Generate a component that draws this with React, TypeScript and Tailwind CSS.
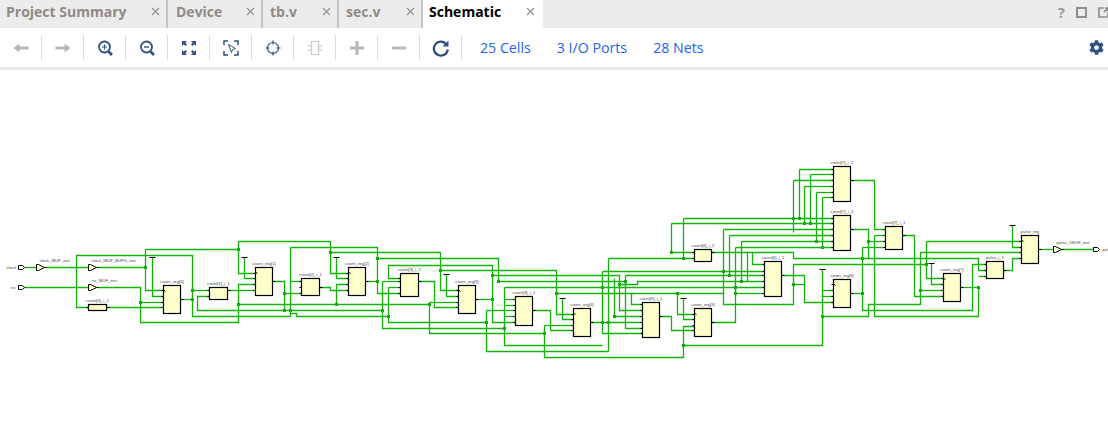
import React from 'react';
import { FaCog } from 'react-icons/fa';

type Cell = { x: number; y: number; w: number; h: number; label: string; pins: number[]; out: number };

const cells: Cell[] = [
  { x: 88, y: 304, w: 18, h: 6, label: 'count[0]_i_1', pins: [307], out: 307 },
  { x: 163, y: 285, w: 17, h: 28, label: 'count_reg[0]', pins: [290, 296, 302, 307], out: 299 },
  { x: 209, y: 287, w: 18, h: 12, label: 'count[1]_i_1', pins: [290, 296], out: 290 },
  { x: 255, y: 267, w: 17, h: 28, label: 'count_reg[1]', pins: [273, 278, 284, 290], out: 281 },
  { x: 301, y: 278, w: 18, h: 17, label: 'count[2]_i_1', pins: [281, 287, 293], out: 287 },
  { x: 348, y: 267, w: 17, h: 28, label: 'count_reg[2]', pins: [273, 278, 284, 290], out: 281 },
  { x: 400, y: 273, w: 18, h: 23, label: 'count[3]_i_1', pins: [278, 281, 287, 293], out: 281 },
  { x: 458, y: 285, w: 17, h: 28, label: 'count_reg[3]', pins: [290, 296, 302, 307], out: 299 },
  { x: 515, y: 296, w: 17, h: 29, label: 'count[4]_i_1', pins: [299, 305, 310, 316, 322], out: 310 },
  { x: 573, y: 308, w: 17, h: 28, label: 'count_reg[4]', pins: [314, 319, 325, 330], out: 322 },
  { x: 642, y: 302, w: 17, h: 35, label: 'count[5]_i_1', pins: [304, 310, 316, 322, 328, 333], out: 316 },
  { x: 694, y: 308, w: 17, h: 28, label: 'count_reg[5]', pins: [314, 319, 325, 330], out: 322 },
  { x: 694, y: 249, w: 17, h: 12, label: 'count[6]_i_2', pins: [252, 258], out: 252 },
  { x: 764, y: 261, w: 17, h: 35, label: 'count[6]_i_1', pins: [264, 271, 275, 281, 287, 293], out: 275 },
  { x: 833, y: 279, w: 17, h: 28, label: 'count_reg[6]', pins: [284, 290, 296, 302], out: 293 },
  { x: 833, y: 166, w: 17, h: 35, label: 'count[7]_i_2', pins: [169, 174, 180, 186, 192, 197], out: 180 },
  { x: 833, y: 215, w: 17, h: 35, label: 'count[7]_i_3', pins: [218, 223, 229, 235, 241, 247], out: 229 },
  { x: 885, y: 226, w: 17, h: 23, label: 'count[7]_i_1', pins: [229, 235, 241, 247], out: 235 },
  { x: 943, y: 273, w: 17, h: 28, label: 'count_reg[7]', pins: [278, 284, 290, 296], out: 287 },
  { x: 986, y: 261, w: 17, h: 17, label: 'pulse_i_1', pins: [264, 270, 276], out: 270 },
  { x: 1021, y: 235, w: 17, h: 28, label: 'pulse_reg', pins: [241, 247, 252, 258], out: 249 },
];

// every net is a green polyline, in page coordinates
const nets = [
  '24,267 36,267', '45,267 88,267', '97,267 145,267', '24,287 88,287',
  '145,249 145,290 163,290', '145,249 238,249', '238,241 238,273 255,273',
  '238,241 330,241 330,273 348,273', '330,252 440,252 440,290 458,290',
  '440,270 556,270 556,314 573,314',
  '97,287 140,287 140,322 238,322 238,284 255,284', '140,302 163,302',
  '106,307 163,307', '88,307 76,307 76,255 192,255 192,316 290,316',
  '180,299 192,299', '192,290 209,290', '227,290 255,290',
  '209,296 197,296 197,310 382,310', '238,304 336,304 429,304',
  '152,257 152,296 163,296', '244,257 244,278 255,278', '336,257 336,278 348,278',
  '348,284 336,284 336,304', '272,281 284,281 284,310', '284,293 301,293',
  '290,281 301,281', '290,247 377,247 377,293 400,293', '290,247 290,316',
  '365,281 377,281', '377,258 498,258 498,281',
  '319,287 330,287 330,290 348,290', '400,278 388,278 388,265 492,265 492,322 515,322',
  '382,281 400,281', '382,281 382,328 504,328', '504,287 504,345 602,345',
  '515,299 504,299', '504,287 764,287', '290,313 296,313 296,316 388,316',
  '388,287 388,322 486,322', '400,287 388,287', '486,310 515,310', '486,310 486,351 608,351',
  '418,281 434,281 434,307 458,307', '429,302 458,302', '429,304 429,333 544,333',
  '446,274 446,296 458,296', '475,299 492,299', '492,275 619,275 619,310 642,310',
  '498,281 625,281', '532,310 550,310 550,330 573,330', '544,325 573,325', '544,325 544,357 683,357 683,326 694,326',
  '515,316 504,316', '515,305 504,305', '556,293 723,293 723,304 793,304 793,264 926,264',
  '562,298 562,319 573,319', '590,322 642,322', '602,271 602,333 642,333',
  '602,271 764,271', '608,258 608,351', '608,258 694,258', '625,275 764,275',
  '625,275 625,328 642,328', '619,284 637,284 637,281 764,281', '631,293 631,304 642,304',
  '614,278 614,316 642,316', '659,316 671,316 671,330 694,330', '677,293 677,314 694,314',
  '683,298 683,319 694,319', '683,345 822,345 822,269', '822,290 833,290', '822,296 833,296',
  '822,316 868,316 868,304 920,304 920,252 1021,252', '683,218 683,258', '683,218 833,218',
  '671,223 671,252 694,252', '671,223 833,223', '723,229 723,293', '723,229 833,229',
  '729,235 729,275', '729,235 833,235', '741,241 741,281', '741,241 833,241',
  '735,247 735,322 711,322', '735,247 833,247', '735,293 764,293',
  '711,252 793,252 793,258 978,258 978,270 986,270', '752,252 752,264 764,264',
  '747,252 747,281', '781,275 804,275 804,302 833,302', '793,284 804,284',
  '793,180 793,232', '793,180 833,180', '799,169 799,218', '799,169 833,169',
  '810,174 810,223', '810,174 833,174', '804,186 804,223', '804,186 833,186',
  '816,192 816,241', '816,192 833,192', '822,197 822,247', '822,197 833,197',
  '850,180 874,180 874,229 885,229', '850,229 868,229 868,258', '868,241 885,241',
  '850,293 862,293', '862,247 862,310 972,310 972,264 986,264', '862,247 885,247',
  '874,235 885,235', '874,235 874,316 978,316 978,287', '978,276 986,276', '960,287 978,287',
  '926,241 926,278 943,278', '926,241 1021,241', '931,263 931,284 943,284', '920,290 943,290',
  '902,235 914,235 914,296 943,296', '1003,270 1012,270 1012,258 1021,258',
  '1012,225 1012,247 1021,247', '1038,249 1053,249', '1061,249 1093,249',
];

const dots = [
  [145, 267], [238, 249], [192, 290], [192, 299], [140, 302], [238, 304], [330, 252], [284, 293], [284, 310],
  [290, 310], [336, 304], [377, 281], [377, 258], [382, 310], [388, 316], [429, 304], [440, 270], [492, 275],
  [492, 299], [498, 281], [486, 322], [504, 328], [544, 333], [556, 293], [602, 287], [602, 322], [608, 322],
  [614, 316], [619, 284], [625, 281], [677, 293], [683, 258], [671, 252], [683, 345], [723, 271], [729, 275],
  [741, 281], [735, 287], [735, 293], [793, 218], [799, 218], [804, 223], [810, 223], [816, 241], [822, 247],
  [793, 284], [822, 316], [862, 258], [862, 293], [868, 241], [920, 290], [926, 264], [978, 287],
];

const vcc = [[149, 155, 257], [241, 247, 257], [333, 339, 257], [443, 449, 274], [559, 565, 298], [680, 686, 298], [819, 825, 269], [928, 934, 263], [1009, 1015, 225]];

const Buffer = ({ x, y, label, lx }: { x: number; y: number; label: string; lx: number }) => (
  <g>
    <path d={`M${x} ${y - 3}v6M${x} ${y - 3}h2l6 3l-6 3h-2`} fill="#ffffcc" stroke="#000" />
    <path d={`M${x + 8} ${y}h2`} stroke="#000" />
    <text x={lx} y={y - 6} fontSize="4.2" fill="#444">{label}</text>
  </g>
);

const Port = ({ x, y, label, lx }: { x: number; y: number; label: string; lx: number }) => (
  <g>
    <path d={`M${x} ${y - 2}h4l2 2l-2 2h-4z`} fill="#fff" stroke="#000" />
    <text x={lx} y={y + 1.5} fontSize="4.2" fill="#444">{label}</text>
  </g>
);

const Schematic = () => (
  <svg viewBox="0 70 1108 372" width={1108} height={372} className="block" style={{ fontFamily: '"Liberation Sans", sans-serif' }}>
    <g transform="translate(.5 .5)">
      {nets.map((d, i) => <polyline key={i} points={d} fill="none" stroke="#14b30a" strokeWidth="1.3" />)}
      {dots.map(([x, y], i) => <rect key={i} x={x - 1.5} y={y - 1.5} width={3} height={3} fill="#14a80a" />)}
      {vcc.map(([a, b, y], i) => <path key={i} d={`M${a} ${y}H${b}`} stroke="#000" />)}
      {cells.map((c) => (
        <g key={c.label}>
          <rect x={c.x} y={c.y} width={c.w} height={c.h} fill="#ffffcc" stroke="#000" strokeWidth="1.2" />
          {c.pins.map((p) => <path key={p} d={`M${c.x - 2} ${p}h2`} stroke="#000" />)}
          <path d={`M${c.x + c.w} ${c.out}h3`} stroke="#000" />
          {c.label.includes('reg') && <path d={`M${c.x} ${c.y + 4.5}l2 1.5`} stroke="#000" />}
          <text x={c.x + c.w / 2} y={c.y - 3} fontSize="4.2" fill="#444" textAnchor="middle">{c.label}</text>
        </g>
      ))}
      <Buffer x={36} y={267} label="clock_IBUF_inst" lx={39} />
      <Buffer x={88} y={267} label="clock_IBUF_BUFG_inst" lx={91} />
      <Buffer x={88} y={287} label="rst_IBUF_inst" lx={91} />
      <Buffer x={1053} y={249} label="pulse_OBUF_inst" lx={1056} />
      <Port x={18} y={267} label="clock" lx={6} />
      <Port x={18} y={287} label="rst" lx={10} />
      <Port x={1093} y={249} label="pulse" lx={1102} />
    </g>
  </svg>
);

const Tab = ({ label, w, pl, active }: { label: string; w: string; pl: string; active?: boolean }) => (
  <div className={`${w} ${pl} h-full shrink-0 flex items-center justify-between pr-[6px] pb-[6px] border-r-2 ${active ? 'bg-white border-transparent text-black' : 'border-[#c4c4c4] text-[#8f8a86]'}`}>
    <span className="text-[14px] font-bold">{label}</span>
    <svg width="9" height="9" viewBox="0 0 9 9"><path d="M1 1l7 7M8 1l-7 7" stroke="#8f8f8f" strokeWidth="1.1" /></svg>
  </div>
);

const TB = ({ children }: { children: React.ReactNode }) => (
  <div className="w-[42px] h-[25px] flex items-center justify-center border-r border-[#dcdcdc]">
    <svg width="20" height="20" viewBox="0 0 20 20" fill="none">{children}</svg>
  </div>
);

const navy = '#2f5080';
const off = '#b8b8b8';

export default function App() {
  return (
    <div className="w-[1108px] h-[442px] bg-white overflow-hidden" style={{ fontFamily: '"Open Sans", sans-serif' }}>
      <div className="h-[28px] bg-[#ececec] flex items-center">
        <Tab label="Project Summary" w="w-[168px]" pl="pl-[6px]" />
        <Tab label="Device" w="w-[95px]" pl="pl-[8px]" />
        <Tab label="tb.v" w="w-[76px]" pl="pl-[7px]" />
        <Tab label="sec.v" w="w-[84px]" pl="pl-[7px]" />
        <Tab label="Schematic" w="w-[120px]" pl="pl-[6px]" active />
        <div className="flex-1" />
        <div className="flex items-center gap-[11px] mr-[-1px] pb-[3px]">
          <span className="text-[15px] font-bold text-[#9a9a9a] leading-none">?</span>
          <span className="w-[11px] h-[11px] border-2 border-[#8f8f8f]" />
          <svg width="11" height="11" viewBox="0 0 11 11" fill="none"><path d="M6 1H1v9h9V5M7 1h3M10 1v3M9.500 1.500L6 5" stroke="#8f8f8f" strokeWidth="1.700" /></svg>
        </div>
      </div>

      <div className="h-[39px] flex items-center pr-[4px] text-[14.2px] text-[#2563f5]">
        <TB><path d="M2.500 10l6-4.500v3h9v3h-9v3z" fill={off} /></TB>
        <TB><path d="M17.500 10l-6-4.500v3h-9v3h9v3z" fill={off} /></TB>
        <TB><circle cx="9.500" cy="9" r="5.500" stroke={navy} strokeWidth="1.800" /><path d="M9.500 6.500v5M7 9h5" stroke={navy} strokeWidth="1.200" /><path d="M13.500 13.500l3.500 3.500" stroke={navy} strokeWidth="2.600" /></TB>
        <TB><circle cx="9.500" cy="9" r="5.500" stroke={navy} strokeWidth="1.800" /><path d="M7 9h5" stroke={navy} strokeWidth="1.400" /><path d="M13.500 13.500l3.500 3.500" stroke={navy} strokeWidth="2.600" /></TB>
        <TB><path d="M3 3h5L6.300 4.700 8 6.500 6.500 8 4.700 6.300 3 8zM17 3v5l-1.700-1.700L13.500 8 12 6.500l1.700-1.800L12 3zM3 17v-5l1.700 1.700L6.500 12 8 13.500l-1.700 1.800L8 17zM17 17h-5l1.700-1.700L12 13.500l1.500-1.500 1.800 1.700L17 12z" fill={navy} /></TB>
        <TB><path d="M7 3H3v4M13 3h4v4M3 13v4h4M17 13v4h-4" stroke={navy} strokeWidth="1.500" /><path d="M7.500 6.500l7 4-3 1-1 3z" fill="#fff" stroke={navy} strokeWidth="1" /></TB>
        <TB><circle cx="10" cy="10" r="5.500" stroke={navy} strokeWidth="1.200" /><path d="M10 2.500v4M10 13.500v4M2.500 10h4M13.500 10h4" stroke={navy} strokeWidth="1.200" /></TB>
        <TB><rect x="6.500" y="3.500" width="7" height="13" stroke="#cfcfcf" strokeWidth="1.300" /><path d="M3 8h3.500M3 12h3.500M13.500 8H17M13.500 12H17" stroke="#cfcfcf" strokeWidth="1.300" /></TB>
        <TB><path d="M10 3v14M3 10h14" stroke={off} strokeWidth="3" /></TB>
        <TB><path d="M3 10h14" stroke={off} strokeWidth="3" /></TB>
        <TB><path d="M15.500 6.500A7 7 0 1 0 16.800 11.500" stroke={navy} strokeWidth="2.200" /><path d="M17.500 2.500v6h-6z" fill={navy} /></TB>
        <div className="flex items-center pl-[18px] gap-[26px]">
          <span>25 Cells</span>
          <span>3 I/O Ports</span>
          <span>28 Nets</span>
        </div>
        <div className="flex-1" />
        <FaCog className="text-[#2f5080] w-[15px] h-[15px]" />
      </div>
      <div className="h-[3px] bg-[#e8e8e8]" />
      <Schematic />
    </div>
  );
}
